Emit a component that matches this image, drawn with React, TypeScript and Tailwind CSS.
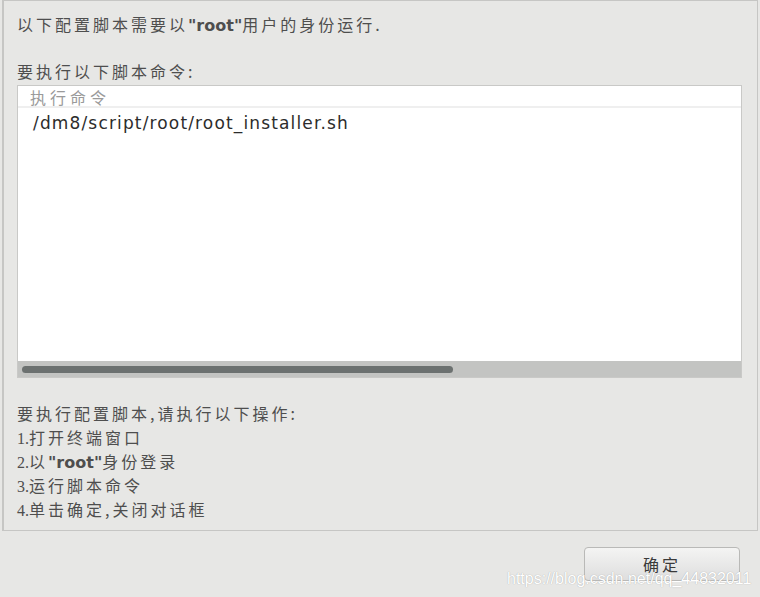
import React from "react";

const cjk = '"Noto Sans CJK SC", "DejaVu Sans", sans-serif';

const Root = () => (
  <span className="font-semibold tracking-normal" style={{ fontFamily: '"DejaVu Sans", sans-serif' }}>
    "root"
  </span>
);

const Num = ({ n }: { n: string }) => (
  <span className="tracking-normal" style={{ fontFamily: '"Liberation Serif", serif' }}>
    {n}
  </span>
);

export default function App() {
  return (
    <div
      className="relative w-[760px] h-[597px] overflow-hidden bg-[#e7e7e5] flex flex-col text-[16px] text-[#4e4e4e]"
      style={{ fontFamily: cjk }}
    >
      <div className="h-[531px] ml-[2px] mr-[2px] border border-[#c6c6c4] border-l-2 flex flex-col pl-[13px] pr-[14px]">
        <div className="mt-[11px] h-[24px] leading-[24px] tracking-[3px] whitespace-nowrap">
          以下配置脚本需要以<Root />用户的身份运行.
        </div>
        <div className="mt-[23px] h-[24px] leading-[24px] tracking-[3px] whitespace-nowrap">
          要执行以下脚本命令:
        </div>
        <div className="mt-[2px] h-[293px] w-[725px] border border-[#c9c9c7] bg-white flex flex-col">
          <div className="h-[22px] leading-[22px] pl-[12px] text-[#9a9a9a] tracking-[4px] border-b-2 border-[#efefef]">
            执行命令
          </div>
          <div className="flex-1 pl-[15px] pt-[3px]">
            <div
              className="h-[24px] leading-[24px] text-[17px] text-[#2c2c2c] tracking-[1.15px] whitespace-nowrap"
              style={{ fontFamily: '"DejaVu Sans", sans-serif' }}
            >
              /dm8/script/root/root_installer.sh
            </div>
          </div>
          <div className="h-[16px] bg-[#c3c4c2] flex items-center pl-[4px]">
            <div className="h-[7px] w-[431px] rounded-full bg-[#6c7170]" />
          </div>
        </div>
        <div className="mt-[23px] flex flex-col tracking-[3px] whitespace-nowrap">
          <div className="h-[24px] leading-[24px]">要执行配置脚本,请执行以下操作:</div>
          <div className="h-[24px] leading-[24px]">
            <Num n="1." />打开终端窗口
          </div>
          <div className="h-[24px] leading-[24px]">
            <Num n="2." />以<Root />身份登录
          </div>
          <div className="h-[24px] leading-[24px]">
            <Num n="3." />运行脚本命令
          </div>
          <div className="h-[24px] leading-[24px]">
            <Num n="4." />单击确定,关闭对话框
          </div>
        </div>
      </div>
      <div className="flex justify-end pr-[20px] pt-[16px]">
        <button className="w-[156px] h-[34px] rounded-[4px] border border-[#b9b9b7] bg-gradient-to-b from-[#f4f4f3] to-[#dedede] text-[#3a3a3a] text-[16px] tracking-[3px] shadow-[0_1px_0_#ffffff]">
          确定
        </button>
      </div>
      <div
        className="absolute left-[507px] top-[567px] text-[16px] text-white whitespace-nowrap"
        style={{ fontFamily: '"Liberation Sans", Arial, sans-serif', textShadow: "0 0 1px #9a9a9a" }}
      >
        https://blog.csdn.net/qq_44832011
      </div>
    </div>
  );
}
